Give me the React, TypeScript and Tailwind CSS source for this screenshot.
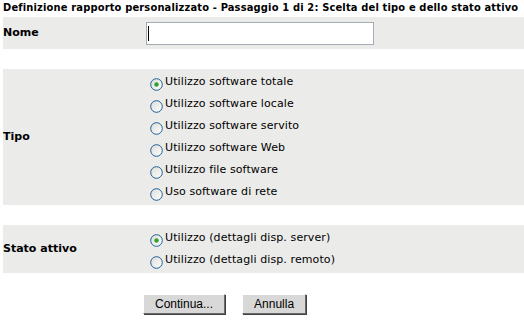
import React from 'react';

const Radio = ({ checked }: { checked?: boolean }) => (
  <svg width="13" height="13" viewBox="0 0 13 13" className="mt-[4px] shrink-0">
    <defs>
      <linearGradient id="rg" x1="0" y1="0" x2="1" y2="1">
        <stop offset="0" stopColor="#dcdcd6" />
        <stop offset="1" stopColor="#ffffff" />
      </linearGradient>
    </defs>
    <circle cx="6.5" cy="6.5" r="5.8" fill="url(#rg)" stroke="#1f5f97" strokeWidth="1" />
    {checked && <circle cx="6.5" cy="6.5" r="2.2" fill="#2ea32e" />}
  </svg>
);

const Option = ({ label, checked }: { label: string; checked?: boolean }) => (
  <div className="flex h-[22px] items-center">
    <Radio checked={checked} />
    <span className="ml-[2px] tracking-[0.1px]">{label}</span>
  </div>
);

const App = () => {
  return (
    <div className="min-h-[329px] w-[524px] bg-white text-[11px] text-black" style={{ fontFamily: '"DejaVu Sans", sans-serif' }}>
      {/* Title */}
      <div className="flex h-[17px] items-center whitespace-nowrap pl-[3px] font-bold tracking-[0.17px]" style={{ fontFamily: '"DejaVu Sans Condensed", "DejaVu Sans", sans-serif' }}>
        Definizione rapporto personalizzato - Passaggio 1 di 2: Scelta del tipo e dello stato attivo
      </div>

      {/* Nome */}
      <div className="ml-[3px] flex h-[32px] items-center bg-[#ebebe9]">
        <div className="w-[143px] font-bold">Nome</div>
        <div className="flex h-[23px] w-[228px] items-center border border-[#a5acb2] bg-white">
          <span className="ml-[1px] h-[15px] w-[1px] bg-black" />
        </div>
      </div>

      <div className="h-[20px]" />

      {/* Tipo */}
      <div className="ml-[3px] flex items-center bg-[#ebebe9] py-[2px]">
        <div className="w-[143px] font-bold">Tipo</div>
        <div className="flex flex-col pl-[4px]">
          <Option label="Utilizzo software totale" checked />
          <Option label="Utilizzo software locale" />
          <Option label="Utilizzo software servito" />
          <Option label="Utilizzo software Web" />
          <Option label="Utilizzo file software" />
          <Option label="Uso software di rete" />
        </div>
      </div>

      <div className="h-[20px]" />

      {/* Stato attivo */}
      <div className="ml-[3px] flex items-center bg-[#ebebe9] py-[2px]">
        <div className="w-[143px] font-bold">Stato attivo</div>
        <div className="flex flex-col pl-[4px]">
          <Option label="Utilizzo (dettagli disp. server)" checked />
          <Option label="Utilizzo (dettagli disp. remoto)" />
        </div>
      </div>

      {/* Buttons */}
      <div className="mt-[21px] flex gap-[17px] pl-[143px]" style={{ fontFamily: '"Liberation Sans", Arial, sans-serif' }}>
        <button className="h-[20px] border border-t-white border-l-white border-r-[#6a6a6a] border-b-[#6a6a6a] bg-[#d8d8d8] px-[11px] text-[12px] leading-none shadow-[1px_1px_0_#404040]">
          Continua...
        </button>
        <button className="h-[20px] border border-t-white border-l-white border-r-[#6a6a6a] border-b-[#6a6a6a] bg-[#d8d8d8] px-[11px] text-[12px] leading-none shadow-[1px_1px_0_#404040]">
          Annulla
        </button>
      </div>
    </div>
  );
};

export default App;
